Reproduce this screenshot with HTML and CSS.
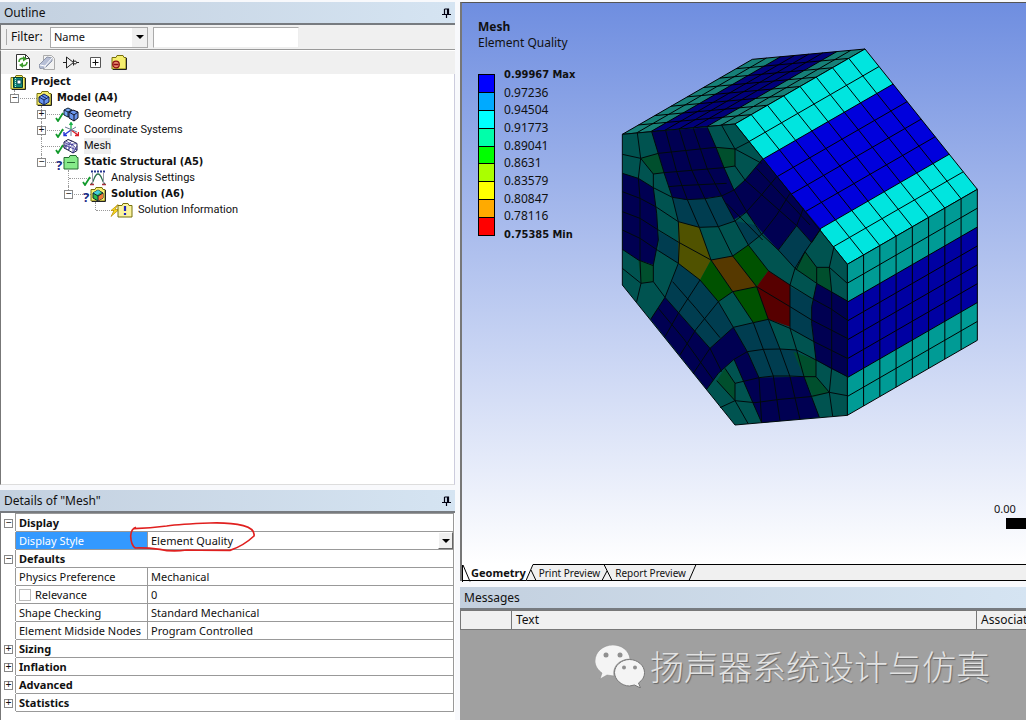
FILE: index.html
```
<!DOCTYPE html>
<html lang="en">
<head>
<meta charset="utf-8">
<title>Mechanical - Mesh</title>
<link rel="stylesheet" href="styles.css">
</head>
<body>
<svg class="defs" aria-hidden="true">
  <defs>
    <symbol id="pin" viewBox="0 0 9 10"><path d="M2.500 1h4v5M2.500 1v5M5.500 1v5M0 6.500h9M4.500 7v3" fill="none" stroke="#001" stroke-width="1.200"/></symbol>
    <symbol id="check" viewBox="0 0 9 10"><path d="M1 6l2 3 5-8" fill="none" stroke="#129a2c" stroke-width="1.800"/></symbol>
    <symbol id="folder" viewBox="0 0 16 16"><path d="M1 3.500h4l1-2h6l1 2h2v11.500H1z" fill="#f5ee6e" stroke="#77700c"/><path d="M2 15.500h13.500V4" fill="none" stroke="#222"/></symbol>
    <symbol id="cubes" viewBox="0 0 16 16"><path d="M1 4l4-2 4 2v5l-4 2-4-2z" fill="#79a8f4" stroke="#123" stroke-width="1"/><path d="M1 4l4 2 4-2M5 6v5" fill="none" stroke="#123"/><path d="M6 6l4-2 5 2v6l-4 3-5-3z" fill="#6b95ec" stroke="#112" stroke-width="1"/><path d="M6 6l5 3 4-3M11 9v6" fill="none" stroke="#112"/></symbol>
  </defs>
</svg>
<div class="app">
  <div class="side">
    <section class="panel outline">
      <h2 class="title">Outline<svg class="pin"><use href="#pin"/></svg></h2>
      <div class="filter">
        <label for="filter">Filter:</label>
        <span class="combo"><select id="filter"><option>Name</option></select><i class="arrow"></i></span>
        <input class="query" type="text" aria-label="Filter text">
      </div>
      <div class="tools">
        <button aria-label="Refresh"><svg viewBox="0 0 16 16"><path d="M1.500.5h9l4 4v11h-13z" fill="#fff" stroke="#333"/><path d="M10.500.5v4h4" fill="none" stroke="#333"/><path d="M4 8c0-3 2-4 5-3.500" fill="none" stroke="#3b9a2b" stroke-width="1.600"/><path d="M8 2l4 3-4 2.500z" fill="#3b9a2b"/><path d="M12 8c0 3-2 4-5 3.500" fill="none" stroke="#3b9a2b" stroke-width="1.600"/><path d="M8 14l-4-3 4-2.500z" fill="#3b9a2b"/></svg></button>
        <button aria-label="Clean"><svg viewBox="0 0 16 16"><path d="M4.500 1.500h8l3 3v11h-11z" fill="#f2f2f2" stroke="#aaa"/><path d="M0 11l8-8 5 1v3l-7 7-5 .500z" fill="#b7bfd6" stroke="#8d95a8"/><path d="M1 11l5 1 7-8M6 12v2" stroke="#fff" fill="none"/></svg></button>
        <button aria-label="Suppress"><svg viewBox="0 0 16 16"><path d="M0 8.500h3M3.500 3v11l7-5.500zM10.500 5.500v6M13 8.500h3" fill="none" stroke="#222"/><circle cx="12" cy="8.500" r="1.500" fill="#fff" stroke="#222"/></svg></button>
        <button aria-label="Expand all"><svg viewBox="0 0 16 16"><path d="M3.500 3.500h10v10h-10z" fill="#fff" stroke="#555"/><path d="M5.500 8.500h6M8.500 5.500v6" stroke="#111"/></svg></button>
        <button aria-label="Hide folder"><svg viewBox="0 0 16 16"><use href="#folder"/><circle cx="5" cy="10.500" r="3.300" fill="#e98a70" stroke="#8d0d12" stroke-width="1.200"/><path d="M2.500 10.500h5" stroke="#8d0d12" stroke-width="1.500"/></svg></button>
      </div>
      <ul class="tree">
        <li><div class="node root"><svg viewBox="0 0 16 16"><use href="#folder"/><path d="M3.500 3.500h9v10h-9z" fill="#118779" stroke="#043a32"/><path d="M7 6h4v4H7z" fill="#fff" stroke="#045"/><path d="M5.500 4v9" stroke="#c9e9da" stroke-dasharray="1 1"/></svg><b>Project</b></div>
        <ul>
          <li><div class="node"><button class="exp" aria-label="Collapse">−</button><svg viewBox="0 0 16 16"><use href="#folder"/><path d="M3 7l5-3 5 3v5l-5 3-5-3z" fill="#6793ee" stroke="#102055"/><path d="M3 7l5 3 5-3M8 10v5M5.500 5.500l5 3" fill="none" stroke="#102055"/></svg><b>Model (A4)</b></div>
          <ul>
            <li><div class="node"><button class="exp" aria-label="Expand">+</button><svg class="status"><use href="#check"/></svg><svg><use href="#cubes"/></svg><span>Geometry</span></div></li>
            <li><div class="node"><button class="exp" aria-label="Expand">+</button><svg class="status"><use href="#check"/></svg><svg viewBox="0 0 16 16"><path d="M8 8V1M6.500 3L8 .5 9.500 3" fill="none" stroke="#19b24a" stroke-width="1.300"/><path d="M8 8l-7 5M1 10v3.500h3" fill="none" stroke="#2536d6" stroke-width="1.400"/><path d="M8 8l7 5M12 13.500h3.500V10" fill="none" stroke="#db1f2a" stroke-width="1.400"/><path d="M2 5l12 5M13 5L8 8v6" stroke="#6c7b99" fill="none"/></svg><span>Coordinate Systems</span></div></li>
            <li><div class="node"><svg class="status"><use href="#check"/></svg><svg viewBox="0 0 16 16"><path d="M1 4l4-2.500L9 3l5 2.500v7L10 15l-5-3-4-2z" fill="#fff" stroke="#14143c"/><path d="M1 4l5 2.500 8-1M6 6.500V12M10 8.500V15M1 7l13 5M3 3l8 5 3 4M5 12l5-6M1 10l8-7M10 15l4-7M3 5v6" fill="none" stroke="#332e91" stroke-width=".8"/></svg><span class="current">Mesh</span></div></li>
            <li><div class="node"><button class="exp" aria-label="Collapse">−</button><em class="status">?</em><svg viewBox="0 0 16 16"><path d="M1 3.500h5l1-2h6l1 2h1v11.500H1z" fill="#86ea8a" stroke="#256c31"/><path d="M4 8.500h8" stroke="#256c31"/></svg><b>Static Structural (A5)</b></div>
            <ul>
              <li><div class="node"><svg class="status"><use href="#check"/></svg><svg viewBox="0 0 16 16"><path d="M1 1.500h14" stroke="#26358f" stroke-width="2" stroke-dasharray="2 1"/><path d="M1 14C4 13 4 4 8 4s4 9 7 10" fill="none" stroke="#2d704f" stroke-width="1.300"/><path d="M2.500 3v11M13.500 3v11" stroke="#99a"/><path d="M0 14.500h4M12 14.500h4" stroke="#a8323a" stroke-width="1.500"/></svg><span>Analysis Settings</span></div></li>
              <li><div class="node"><button class="exp" aria-label="Collapse">−</button><em class="status">?</em><svg viewBox="0 0 16 16"><use href="#folder"/><path d="M3 7l5-3 5 3v5l-5 3-5-3z" fill="#29bb4c" stroke="#123"/><path d="M8 10l5-3v5l-5 3z" fill="#ef7a36"/><path d="M3 7l5-3 3 2-4 3z" fill="#44cbdc"/><path d="M3 7l5 3 5-3M8 10v5" fill="none" stroke="#123"/></svg><b>Solution (A6)</b></div>
              <ul>
                <li><div class="node"><svg class="status bolt" viewBox="0 0 10 12"><path d="M8 0L1 6h3l-3 6 8-7H5z" fill="#f8d81d" stroke="#b58b04" stroke-width=".7"/></svg><svg viewBox="0 0 16 16"><path d="M1 3.500h4l1-2h5l1 2h3v11.500H1z" fill="#faf3a0" stroke="#77700c"/><path d="M8 4v5M8 11v2" stroke="#1e25bd" stroke-width="2.200"/></svg><span>Solution Information</span></div></li>
              </ul></li>
            </ul></li>
          </ul></li>
        </ul></li>
      </ul>
    </section>
    <section class="panel details">
      <h2 class="title">Details of "Mesh"<svg class="pin"><use href="#pin"/></svg></h2>
      <div class="sheet">
        <table class="props">
          <colgroup><col class="gutter"><col class="name"><col></colgroup>
          <tr><td><button class="exp" aria-label="Collapse">−</button></td><th colspan="2">Display</th></tr>
          <tr class="active"><td></td><td><label for="style">Display Style</label></td><td><span class="pick"><select id="style"><option>Element Quality</option></select><i class="arrow"></i></span></td></tr>
          <tr><td><button class="exp" aria-label="Collapse">−</button></td><th colspan="2">Defaults</th></tr>
          <tr><td></td><td>Physics Preference</td><td>Mechanical</td></tr>
          <tr><td></td><td><label class="tick"><input type="checkbox">Relevance</label></td><td>0</td></tr>
          <tr><td></td><td>Shape Checking</td><td>Standard Mechanical</td></tr>
          <tr><td></td><td>Element Midside Nodes</td><td>Program Controlled</td></tr>
          <tr><td><button class="exp" aria-label="Expand">+</button></td><th colspan="2">Sizing</th></tr>
          <tr><td><button class="exp" aria-label="Expand">+</button></td><th colspan="2">Inflation</th></tr>
          <tr><td><button class="exp" aria-label="Expand">+</button></td><th colspan="2">Advanced</th></tr>
          <tr><td><button class="exp" aria-label="Expand">+</button></td><th colspan="2">Statistics</th></tr>
        </table>
        <svg class="mark" viewBox="384 120 384 102"><path d="M408 142Q393 147 392 168Q393 196 406 204Q440 203 480 208Q515 216 560 210Q640 211 690 211Q730 198 762 168Q766 147 730 137Q690 127 630 129Q540 132 500 138Q450 144 402 146" fill="none" stroke="#e0201f" stroke-width="5"/></svg>
      </div>
    </section>
  </div>
  <main class="work">
    <section class="view">
      <div class="canvas">
        <div class="legend">
          <strong>Mesh</strong>
          <span>Element Quality</span>
          <div class="scale">
            <div class="bar"><i class="c1"></i><i class="c2"></i><i class="c3"></i><i class="c4"></i><i class="c5"></i><i class="c6"></i><i class="c7"></i><i class="c8"></i><i class="c9"></i></div>
            <ol class="values"><li><b>0.99967 Max</b></li><li>0.97236</li><li>0.94504</li><li>0.91773</li><li>0.89041</li><li>0.8631</li><li>0.83579</li><li>0.80847</li><li>0.78116</li><li><b>0.75385 Min</b></li></ol>
          </div>
        </div>
        <svg class="model" viewBox="0 0 1140 1200" role="img" aria-label="Meshed hexagonal body">
          <defs><path id="grid" d="M0 0H8M0 1H8M0 2H8M0 3H8M0 4H8M0 5H8M0 6H8M0 7H8M0 8H8M0 0V8M1 0V8M2 0V8M3 0V8M4 0V8M5 0V8M6 0V8M7 0V8M8 0V8" fill="none" stroke="#000" vector-effect="non-scaling-stroke"/></defs>
          <g transform="matrix(48.75 -28.125 42.250 -3.875 37 283)"><path d="M0 0h8v8H0z" fill="#168078"/><path d="M0 2h8v4H0z" fill="#00007a"/><use href="#grid"/></g>
          <g transform="matrix(48.75 -28.125 42.125 52.625 375 252)"><path d="M0 0h8v8H0z" fill="#00e5df"/><path d="M0 2h8v4H0z" fill="#0000dc"/><use href="#grid"/></g>
          <g transform="matrix(48.75 -28.125 0 56.625 712 673)"><path d="M0 0h8v8H0z" fill="#009b95"/><path d="M0 2h8v4H0z" fill="#0000a2"/><use href="#grid"/></g>
          <path d="M37 283L375 252L712 673V1126L375 1155L37 735z" fill="#005350"/>
          <g fill="#000052">
            <path d="M125 275L292 262L318 322L342 383L372 450L405 420L458 357L632 567L605 608L560 557L505 630L450 570L408 517L370 540L335 468L270 477L225 480L187 472L162 398z"/>
            <path d="M37 400L85 415L130 443L140 520L145 600L130 675L85 660L37 628z"/>
            <path d="M165 772L300 925L370 862L412 935L447 1013L490 1008L582 1010L628 1132L455 1148L425 1080L372 958L325 1000L290 1048L122 838z"/>
            <path d="M620 730L665 755L712 783V1010L660 985L618 960L605 850V800z"/>
          </g>
          <g fill="#003d50">
            <path d="M187 472L225 480L270 477L335 468L375 543L320 560L268 562L205 545z"/>
            <path d="M148 575L208 608L205 670L145 632z"/>
            <path d="M205 670L270 720L325 785L370 862L300 925L165 772z"/>
            <path d="M370 862L475 838L510 927L560 930L585 1010L447 1013L412 935z"/>
            <path d="M540 740L605 775V850L612 905L540 865z"/>
            <path d="M505 630L560 557L605 608L555 685z"/>
            <path d="M375 543L435 555L455 583L415 615z"/>
          </g>
          <g fill="#004f2d">
            <path d="M92 355L145 340L162 398L130 402z"/>
            <path d="M318 322L375 327V378L342 383z"/>
            <path d="M85 660L130 675V725L93 730z"/>
            <path d="M345 985L375 1030V1082L320 1022z"/>
            <path d="M585 635L620 682H658L665 755L558 690z"/>
            <path d="M550 935L618 960V1010L658 1057L610 1072L582 1010z"/>
          </g>
          <path d="M205 545L268 562L303 660L270 720L205 670z" fill="#505200"/>
          <path d="M303 660L368 648L440 740L368 755z" fill="#563900"/>
          <path d="M303 660L368 755L325 785L270 720zM368 648L415 615L475 692L440 740zM368 755L440 740L475 838L430 848z" fill="#005200"/>
          <path d="M475 692L540 735V860L475 838L440 740z" fill="#570000"/>
          <g class="edges">
            <path d="M37 283L375 252L712 673V1126L375 1155L37 735z"/>
            <path d="M37 343L92 355L145 340L318 322L375 327L418 305M82 279L92 355L85 415L90 475V660L93 730L80 785M92 355L130 402L162 398L342 383L375 378V327L335 256M130 402V443M375 327L455 370M375 378L405 420"/>
            <path d="M125 275L162 398L187 472L205 545L208 608L205 670L165 772L122 838M167 272L200 395L232 479L268 562L303 660L368 755L430 848L460 928L490 1008L510 1142M208 268L245 390L285 476L325 560L368 648L440 740L475 838L510 927L540 1010L570 1138M250 265L292 387L335 468L375 543L415 615L475 692L540 735L605 775L660 805L712 840M292 262L318 322L342 383L372 450L410 515L455 583L505 630L555 685L620 730L712 783"/>
            <path d="M37 400L85 415L130 443L187 472L232 479L285 476L335 468L372 450L405 420L458 357M37 455L90 475L137 500L205 545L268 562L325 560L375 543L408 517L450 470L500 410M37 515L90 535L145 570L208 608L303 660L368 648L415 615L455 583L500 525L540 460M37 570L90 595L145 632L205 670L270 720L325 785L370 862L412 935L447 1013L455 1148M37 628L85 660L130 677M37 685L93 730L130 725L165 772"/>
            <path d="M130 443L140 520L145 600L130 675V725M188 725L258 805L330 893M165 772L300 925L335 995M145 805L220 895L310 1020M270 720L205 820L165 890M325 785L258 868L210 945M325 785L368 755L440 740L540 800L605 840L712 895M370 862L300 925L250 1000M370 862L430 848L475 838L540 865L612 905L712 955M412 935L372 958L325 1000L290 1048M412 935L460 928L510 927L560 930L618 960L712 1010M447 1013L490 1008L540 1008L582 1010H618V960M372 958L425 1080L455 1148M345 985L375 1030L447 1013M375 1030V1082L435 1088L510 1078L600 1070L658 1057L712 1067M320 1022L375 1082L330 1103M375 1082L415 1152"/>
            <path d="M540 735V865L560 930L582 1010L628 1132M540 735L555 685L585 635L632 567M505 630L560 557L580 505M558 690L585 635L620 682H658L712 730M620 682V730M620 730L605 800V850L618 960M665 755L658 682L672 620M665 755V985L658 1057L668 1128M618 1010L658 1057M350 490L458 600M405 420L560 557L605 608L632 567M440 385L600 555M175 440L210 437L350 430"/>
          </g>
        </svg>
        <div class="ruler"><span>0.00</span><i></i></div>
      </div>
      <nav class="tabs">
        <button class="on"><svg viewBox="0 0 9 17"><path d="M.5 0v17M1 0l7 16.500" fill="none" stroke="#000"/></svg>Geometry</button>
        <svg class="cut" viewBox="0 0 11 17"><path d="M0 0h8L0 17z" fill="#fff"/><path d="M0 16.500L7 .5h4M5 6l5 10.500" fill="none" stroke="#000"/></svg>
        <button>Print Preview</button>
        <svg class="cut" viewBox="0 0 11 17"><path d="M0 16.500L5 7M1 .5h10M2 .5l8 16M0 .5h2" fill="none" stroke="#000"/></svg>
        <button>Report Preview</button>
        <svg class="cut" viewBox="0 0 11 17"><path d="M1 16.500L8 .5h3M0 .5h8" fill="none" stroke="#000"/></svg>
      </nav>
    </section>
    <section class="messages">
      <h2 class="title">Messages</h2>
      <table class="log"><thead><tr><th></th><th>Text</th><th>Associated</th></tr></thead></table>
      <div class="brand">
        <svg viewBox="0 0 50 43"><path d="M18 0C8 0 0 7 0 16c0 5 3 9 7 12l-2 6 7-4 7 1c-2-10 6-17 16-17C34 5 26 0 18 0z" fill="#f4f4f4" stroke="#888" stroke-width=".5"/><path d="M34.500 14.500c-8 0-15 6-15 13s7 13.500 15 13.500l5-1 6 3-2-5c4-3 6-6 6-10.500 0-7-7-13-15-13z" fill="#f4f4f4" stroke="#777"/><g fill="#909090"><circle cx="11" cy="10" r="2.500"/><circle cx="25" cy="10" r="2.500"/><circle cx="29" cy="22.500" r="2"/><circle cx="40" cy="22.500" r="2"/></g></svg>
        <span lang="zh">扬声器系统设计与仿真</span>
      </div>
    </section>
  </main>
</div>
</body>
</html>
```
FILE: styles.css
```
* { box-sizing: border-box; }
body { margin: 0; background: #f8f9fc; color: #111; font: 11px/16px "Noto Sans", "Open Sans", sans-serif; }
button, select, input { font: inherit; color: inherit; border-radius: 0; margin: 0; padding: 0; }
button { border: 0; background: none; }
ul, ol { list-style: none; margin: 0; padding: 0; }
svg { display: block; flex: none; }
.defs { position: absolute; width: 0; height: 0; }
.app { display: flex; gap: 5px; height: 100vh; padding-top: 2px; overflow: hidden; }
.side { width: 455px; flex: none; display: flex; flex-direction: column; gap: 5px; }
.panel { display: flex; flex-direction: column; }
.outline { flex: 1; min-height: 0; }
.title { display: flex; flex: none; align-items: center; justify-content: space-between; height: 23px; margin: 0; padding: 0 4px; font-size: 12px; font-weight: 400; background: linear-gradient(90deg, #c3d0df, #d5e4f2); border-bottom: 2px solid #777b80; }
.pin { width: 9px; height: 10px; }
.filter { display: flex; align-items: center; height: 25px; padding-left: 5px; background: #f0f0f0; border-left: 1px solid #777; border-bottom: 1px solid #999; }
.filter label { width: 44px; padding-left: 4px; border-left: 1px solid #aaa; font-size: 12px; }
.combo, .pick { position: relative; display: flex; align-items: center; }
.combo { width: 98px; height: 21px; margin-right: 5px; background: #fff; border: 1px solid #aaa; }
select { appearance: none; flex: 1; align-self: stretch; border: 0; background: transparent; }
.combo select { padding-left: 3px; }
.arrow { position: absolute; right: 0; top: 0; bottom: 0; width: 15px; background: #f0f0f0; pointer-events: none; display: grid; place-items: center; }
.arrow::after { content: ""; border: 4px solid transparent; border-top-color: #000; border-bottom: 0; }
.query { width: 146px; height: 21px; border: 1px solid #aaa; border-right-color: #eee; border-bottom-color: #eee; background: #fff; }
.tools { display: flex; align-items: center; gap: 8px; height: 24px; padding: 0 0 2px 14px; background: #f0f0f0; border-left: 1px solid #777; border-top: 1px solid #fff; }
.tools button, .tools svg { width: 16px; height: 16px; }
.tree { flex: 1; padding-left: 9px; background: #fff; border-left: 1px solid #777; border-right: 1px solid #ccd; border-bottom: 1px solid #ddd; font-family: Roboto, sans-serif; }
.tree b, .legend b { font-family: "DejaVu Sans Condensed", "DejaVu Sans", sans-serif; }
.tree ul ul { margin-left: 27px; }
.tree li { position: relative; }
.tree ul > li::before { content: ""; position: absolute; left: 4px; top: 0; bottom: 0; border-left: 1px dotted #999; }
.tree ul > li:last-child::before { bottom: auto; height: 8px; }
.node { position: relative; display: flex; align-items: center; gap: 5px; height: 16px; padding-left: 26px; }
.node.root { padding-left: 0; }
.node:not(.root)::before { content: ""; position: absolute; left: 5px; top: 8px; width: 22px; border-top: 1px dotted #999; }
.node svg { width: 16px; height: 16px; position: relative; }
.node .status { position: absolute; left: 18px; top: 6px; width: 9px; height: 10px; }
.node em.status { top: 3px; left: 19px; font: bold 13px/16px "Noto Sans", sans-serif; color: #1a2c86; }
.node .bolt { top: 2px; left: 19px; height: 13px; width: 10px; }
.exp { width: 9px; height: 9px; border: 1px solid #888; background: #fff; font: 10px/7px "Liberation Mono", monospace; display: grid; place-items: center; }
.node .exp { position: absolute; left: 0; top: 4px; }
.current { background: #eee; }
.details { height: 230px; }
.sheet { position: relative; flex: 1; background: #fff; border-left: 1px solid #777; }
.props { width: 453px; border-collapse: collapse; table-layout: fixed; }
.gutter { width: 14px; }
.name { width: 132px; }
.props td, .props th { height: 18px; padding: 0 3px; line-height: 17px; border: 1px solid #999; text-align: left; white-space: nowrap; }
.props tr > td:first-child { padding: 1px 2px 0; border-color: #fff #999 #fff #fff; vertical-align: middle; }
.props tr.active td:nth-child(2) { background: #3399ff; color: #fff; }
.pick { height: 17px; margin-right: -3px; }
.pick .arrow { border: 1px solid #fff; border-right-color: #666; border-bottom-color: #666; }
.tick { display: flex; align-items: center; gap: 4px; }
.tick input { appearance: none; width: 12px; height: 12px; border: 1px solid #bbb; background: #fff; }
.mark { position: absolute; left: 127px; top: 7px; width: 128px; height: 34px; pointer-events: none; }
.work { flex: 1; min-width: 0; display: flex; flex-direction: column; gap: 6px; }
.view { flex: 1; min-height: 0; display: flex; flex-direction: column; border-left: 2px solid #777; border-top: 1px solid #555; }
.canvas { position: relative; flex: 1; min-height: 0; display: flex; gap: 8px; background: linear-gradient(#6f8ee0, #fff); overflow: hidden; }
.legend { width: 140px; flex: none; padding: 16px 0 0 16px; display: flex; flex-direction: column; font-size: 12px; }
.scale { display: flex; gap: 9px; margin-top: 15px; }
.bar { width: 17px; height: 162px; margin-top: 8px; display: grid; border: 1px solid #000; }
.bar i + i { border-top: 1px solid #000; }
.values { display: flex; flex-direction: column; justify-content: space-between; height: 177px; }
.values li { line-height: 16px; white-space: nowrap; }
.values b { font-size: 11px; }
.c1 { background: #0000ff; } .c2 { background: #00aaff; } .c3 { background: #00ffff; }
.c4 { background: #00ffaa; } .c5 { background: #00ff00; } .c6 { background: #aaff00; }
.c7 { background: #ffff00; } .c8 { background: #ffaa00; } .c9 { background: #ff0000; }
.model { width: 380px; height: 400px; margin-top: 37px; }
.edges { fill: none; stroke: #000a0c; stroke-width: 3; }
.ruler { position: absolute; right: 0; bottom: 35px; width: 32px; }
.ruler i { display: block; height: 11px; margin: 1px 0 0 12px; background: #000; }
.tabs { display: flex; height: 17px; background: #f0f0f0; border-bottom: 1px solid #000; }
.tabs::after { content: ""; flex: 1; border-top: 1px solid #000; }
.tabs button { display: flex; padding: 0 2px; font-size: 10px; line-height: 16px; border-top: 1px solid #000; }
.tabs .on { padding: 0; background: #fff; border-top-color: #fff; font-weight: 700; font-size: 11px; }
.tabs svg { height: 17px; }
.tabs .on svg { width: 9px; }
.cut { width: 11px; }
.messages { height: 133px; display: flex; flex-direction: column; background: #a0a0a0; overflow: hidden; }
.log { width: 620px; border-collapse: collapse; table-layout: fixed; background: #f0f0f0; }
.log th { height: 19px; padding: 0 4px; font-size: 12px; font-weight: 400; text-align: left; border: 1px solid #777; }
.log th:nth-child(1) { width: 51px; }
.log th:nth-child(2) { width: 465px; }
.brand { display: flex; align-items: center; gap: 5px; padding: 12px 0 0 135px; color: #e2e2e2; font: 300 34px/48px "Noto Sans CJK SC", sans-serif; text-shadow: 1px 1px 1px #666; white-space: nowrap; }
.brand svg { width: 50px; height: 43px; }
```
